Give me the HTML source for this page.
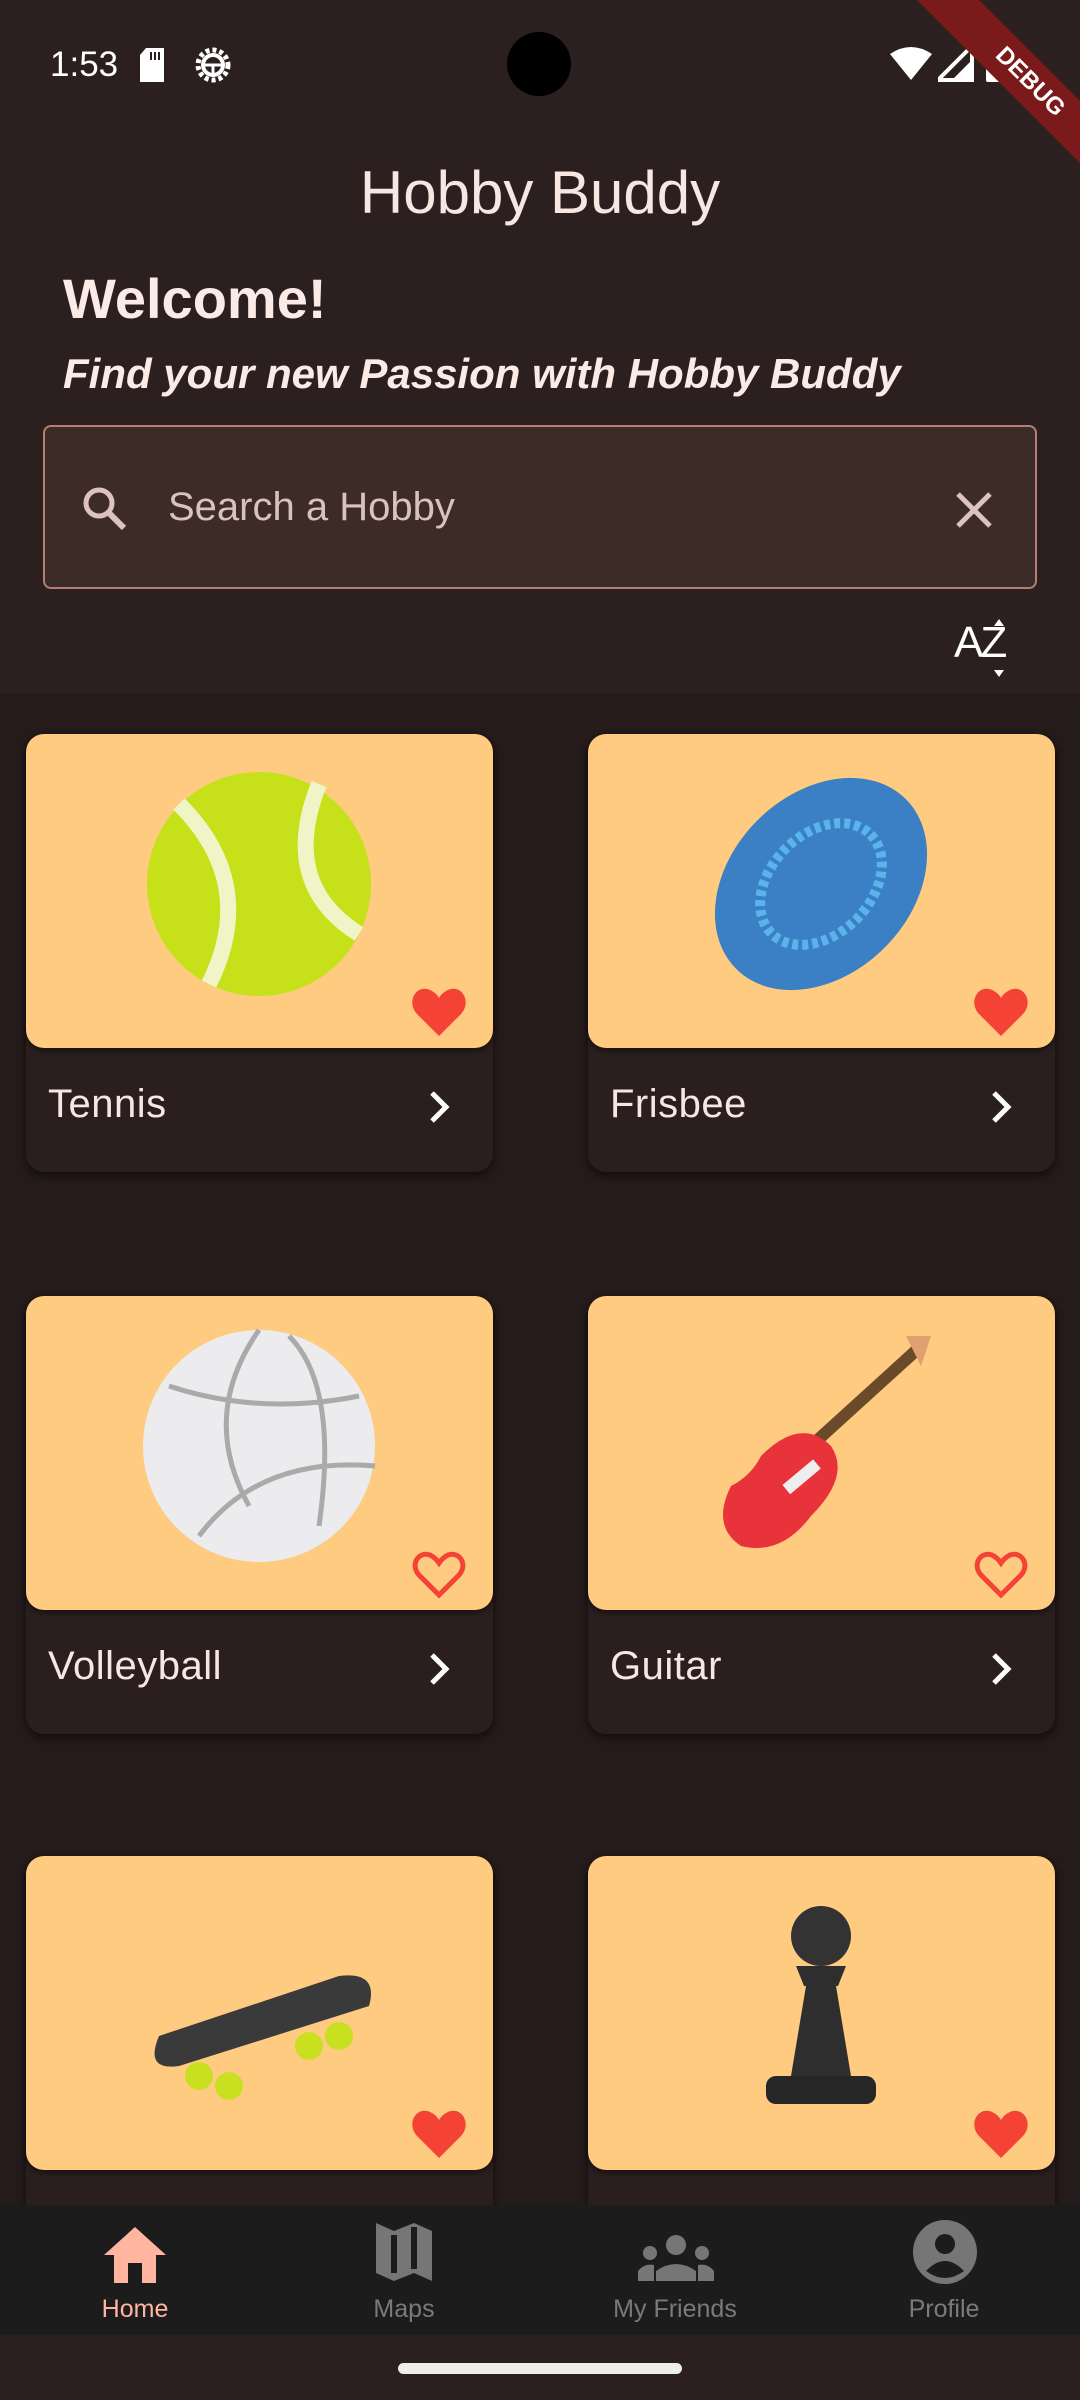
<!DOCTYPE html>
<html><head><meta charset="utf-8">
<style>
*{margin:0;padding:0;box-sizing:border-box}
body{width:1080px;height:2400px;background:#241b1a;font-family:"Liberation Sans",Roboto,sans-serif;position:relative;overflow:hidden;color:#f7e6e1}
.abs{position:absolute}
.header{left:0;top:0;width:1080px;height:693px;background:#2b201f}
.card{position:absolute;width:467px;height:438px;background:#2a1f1e;border-radius:18px;box-shadow:0 4px 8px rgba(0,0,0,.5)}
.img{position:absolute;left:0;top:0;width:467px;height:314px;background:#ffcb80;border-radius:18px;box-shadow:0 3px 6px rgba(0,0,0,.45);overflow:hidden}
.card .name{position:absolute;left:22px;top:348px;font-size:40px;color:#f7e6e1;letter-spacing:.5px}
.card .chev{position:absolute;left:398px;top:355px}
.card .heart{position:absolute;left:386px;top:254px}
.card .pic{position:absolute;left:113px;top:30px}
.nav{left:0;top:2205px;width:1080px;height:130px;background:#1c1c1c}
.nl{position:absolute;top:90px;font-size:25px;color:#7a7a7a;transform:translateX(-50%)}
</style></head><body>
<div class="abs header"></div>
<!-- status bar -->
<div class="abs" style="left:50px;top:45px;font-size:35px;color:#fff">1:53</div>
<svg class="abs" style="left:140px;top:48px" width="30" height="34"><path d="M6 0h18v34H0V7z" fill="#fff"/><rect x="10" y="4" width="2" height="8" fill="#2b201f"/><rect x="14" y="4" width="2" height="8" fill="#2b201f"/><rect x="18" y="4" width="2" height="8" fill="#2b201f"/></svg>
<svg class="abs" style="left:194px;top:46px" width="38" height="38"><circle cx="19" cy="19" r="15" fill="none" stroke="#fff" stroke-width="5" stroke-dasharray="4 3"/><circle cx="19" cy="19" r="10" fill="none" stroke="#fff" stroke-width="4"/><path d="M9 19h20M19 19v10" stroke="#fff" stroke-width="3"/></svg>
<div class="abs" style="left:507px;top:32px;width:64px;height:64px;border-radius:50%;background:#000"></div>
<svg class="abs" style="left:890px;top:46px" width="42" height="36"><path d="M0 8Q21-6 42 8L21 34z" fill="#fff"/></svg>
<svg class="abs" style="left:938px;top:46px" width="36" height="36"><path d="M34 0V34H0z" fill="none" stroke="#fff" stroke-width="4"/><path d="M34 14V34H14z" fill="#fff"/></svg>
<div class="abs" style="left:986px;top:46px;width:20px;height:36px;background:#fff;border-radius:2px"></div>
<div class="abs" style="width:300px;height:44px;background:#7a1a1a;transform:rotate(45deg);transform-origin:center;left:880px;top:60px;text-align:center;font-size:24px;font-weight:bold;color:#fff;line-height:44px">DEBUG</div>
<!-- title -->
<div class="abs" style="left:0;width:1080px;top:158px;text-align:center;font-size:60px;color:#f7e6e1">Hobby Buddy</div>
<div class="abs" style="left:63px;top:266px;font-size:56px;font-weight:bold;color:#fbeae5">Welcome!</div>
<div class="abs" style="left:63px;top:350px;font-size:42px;font-weight:bold;font-style:italic;color:#fbeae5">Find your new Passion with Hobby Buddy</div>
<!-- search -->
<div class="abs" style="left:43px;top:425px;width:994px;height:164px;background:#3d2b28;border:2px solid #b5806f;border-radius:8px"></div>
<svg class="abs" style="left:80px;top:484px" width="50" height="50"><circle cx="19" cy="19" r="13" fill="none" stroke="#dcc3bd" stroke-width="5"/><path d="M28 28L44 44" stroke="#dcc3bd" stroke-width="6"/></svg>
<div class="abs" style="left:168px;top:485px;font-size:40px;color:#d9c2bc">Search a Hobby</div>
<svg class="abs" style="left:954px;top:490px" width="40" height="40"><path d="M4 4L36 36M36 4L4 36" stroke="#dcc3bd" stroke-width="5"/></svg>
<!-- AZ -->
<div class="abs" style="left:954px;top:618px;font-size:44px;color:#fff;letter-spacing:-3px">AZ</div>
<svg class="abs" style="left:992px;top:618px" width="14" height="60"><path d="M2 8L7 1L12 8zM2 52L7 59L12 52z" fill="#fff"/></svg>

<!-- cards -->
<div class="card" style="left:26px;top:734px">
 <div class="img"><svg class="pic" width="240" height="240"><circle cx="120" cy="120" r="112" fill="#c6e01a"/><path d="M40 40Q120 120 70 220" stroke="#f0f5c8" stroke-width="16" fill="none"/><path d="M180 20Q140 120 220 170" stroke="#f0f5c8" stroke-width="16" fill="none"/></svg>
 <svg class="heart" width="54" height="50"><path d="M27 48L5 26C-6 14 4-4 18 2C23 4 26 8 27 10C28 8 31 4 36 2C50-4 60 14 49 26Z" fill="#f44336"/></svg></div>
 <div class="name">Tennis</div><svg class="chev" width="30" height="36"><path d="M8 4L22 18L8 32" stroke="#fff" stroke-width="5" fill="none"/></svg></div>
<div class="card" style="left:588px;top:734px">
 <div class="img"><svg class="pic" width="240" height="240"><ellipse cx="120" cy="120" rx="120" ry="90" transform="rotate(-45 120 120)" fill="#3b7fc4"/><ellipse cx="120" cy="120" rx="70" ry="50" transform="rotate(-45 120 120)" fill="none" stroke="#5ab4ea" stroke-width="10" stroke-dasharray="6 4"/></svg>
 <svg class="heart" width="54" height="50"><path d="M27 48L5 26C-6 14 4-4 18 2C23 4 26 8 27 10C28 8 31 4 36 2C50-4 60 14 49 26Z" fill="#f44336"/></svg></div>
 <div class="name">Frisbee</div><svg class="chev" width="30" height="36"><path d="M8 4L22 18L8 32" stroke="#fff" stroke-width="5" fill="none"/></svg></div>

<div class="card" style="left:26px;top:1296px">
 <div class="img"><svg class="pic" width="240" height="240"><circle cx="120" cy="120" r="116" fill="#ecebee"/><path d="M120 4Q60 90 110 180M30 60Q120 90 220 70M60 210Q120 130 236 140M150 10Q200 60 180 200" stroke="#aaa" stroke-width="5" fill="none"/></svg>
 <svg class="heart" width="54" height="50"><path d="M27 45L7 25C-2 15 6 1 18 5C22 7 25 10 27 13C29 10 32 7 36 5C48 1 56 15 47 25Z" fill="none" stroke="#f44336" stroke-width="5"/></svg></div>
 <div class="name">Volleyball</div><svg class="chev" width="30" height="36"><path d="M8 4L22 18L8 32" stroke="#fff" stroke-width="5" fill="none"/></svg></div>
<div class="card" style="left:588px;top:1296px">
 <div class="img"><svg class="pic" width="240" height="240"><path d="M110 120L220 20" stroke="#6b4a2a" stroke-width="12"/><path d="M205 10l25 0l-10 30z" fill="#e0a070"/><path d="M60 130Q100 90 130 120Q150 150 110 190Q80 230 40 220Q10 200 30 160Q50 150 60 130z" fill="#e8333a"/><rect x="80" y="145" width="40" height="12" fill="#eee" transform="rotate(-40 100 150)"/></svg>
 <svg class="heart" width="54" height="50"><path d="M27 45L7 25C-2 15 6 1 18 5C22 7 25 10 27 13C29 10 32 7 36 5C48 1 56 15 47 25Z" fill="none" stroke="#f44336" stroke-width="5"/></svg></div>
 <div class="name">Guitar</div><svg class="chev" width="30" height="36"><path d="M8 4L22 18L8 32" stroke="#fff" stroke-width="5" fill="none"/></svg></div>

<div class="card" style="left:26px;top:1856px">
 <div class="img"><svg class="pic" width="240" height="240"><path d="M20 150L200 90Q240 85 230 120L40 180Q5 185 20 150z" fill="#3a3a3a"/><circle cx="60" cy="190" r="14" fill="#c8e020"/><circle cx="90" cy="200" r="14" fill="#c8e020"/><circle cx="170" cy="160" r="14" fill="#c8e020"/><circle cx="200" cy="150" r="14" fill="#c8e020"/></svg>
 <svg class="heart" width="54" height="50"><path d="M27 48L5 26C-6 14 4-4 18 2C23 4 26 8 27 10C28 8 31 4 36 2C50-4 60 14 49 26Z" fill="#f44336"/></svg></div></div>
<div class="card" style="left:588px;top:1856px">
 <div class="img"><svg class="pic" width="240" height="240"><circle cx="120" cy="50" r="30" fill="#333"/><path d="M95 80h50l-8 20h-34zM105 100h30l15 90h-60z" fill="#2e2e2e"/><rect x="65" y="190" width="110" height="28" rx="10" fill="#262626"/></svg>
 <svg class="heart" width="54" height="50"><path d="M27 48L5 26C-6 14 4-4 18 2C23 4 26 8 27 10C28 8 31 4 36 2C50-4 60 14 49 26Z" fill="#f44336"/></svg></div></div>

<!-- nav -->
<div class="abs nav">
 <svg class="abs" style="left:102px;top:20px" width="66" height="60"><path d="M33 2L2 30h10v28h14V38h14v20h14V30h10z" fill="#ffb59f"/></svg>
 <svg class="abs" style="left:372px;top:14px" width="64" height="68"><path d="M4 4L22 12L42 4L60 12V62L42 54L22 62L4 54z" fill="#767676"/><path d="M22 16V54M42 8V50" stroke="#1c1c1c" stroke-width="6"/></svg>
 <svg class="abs" style="left:636px;top:28px" width="80" height="50"><circle cx="40" cy="12" r="10" fill="#767676"/><circle cx="14" cy="20" r="7" fill="#767676"/><circle cx="66" cy="20" r="7" fill="#767676"/><path d="M20 48V38Q40 24 60 38V48z M2 48V38Q8 30 18 32V48z M78 48V38Q72 30 62 32V48z" fill="#767676"/></svg>
 <svg class="abs" style="left:912px;top:14px" width="66" height="66"><circle cx="33" cy="33" r="32" fill="#767676"/><circle cx="33" cy="25" r="10" fill="#1c1c1c"/><path d="M14 52Q33 32 52 52Q33 66 14 52z" fill="#1c1c1c"/></svg>
 <div class="nl" style="left:135px;color:#ffb59f">Home</div>
 <div class="nl" style="left:404px">Maps</div>
 <div class="nl" style="left:675px">My Friends</div>
 <div class="nl" style="left:944px">Profile</div>
</div>
<div class="abs" style="left:0;top:2335px;width:1080px;height:65px;background:#2b201f"></div>
<div class="abs" style="left:398px;top:2363px;width:284px;height:11px;border-radius:6px;background:#eee"></div>
</body></html>
